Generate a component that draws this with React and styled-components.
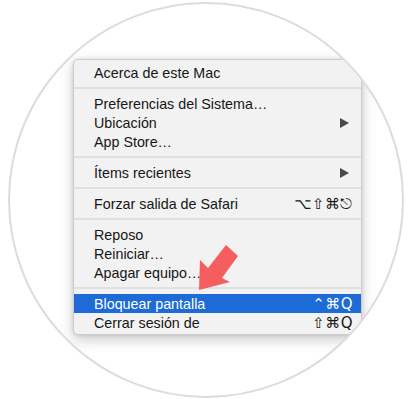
import styled, { createGlobalStyle } from 'styled-components'

const GlobalStyle = createGlobalStyle`
  html, body {
    margin: 0;
    padding: 0;
    background: #ffffff;
  }
  #root {
    width: 410px;
    height: 399px;
    overflow: hidden;
  }
`

const items = [
    [{ label: 'Acerca de este Mac' }],
    [
        { label: 'Preferencias del Sistema…' },
        { label: 'Ubicación', submenu: true },
        { label: 'App Store…' },
    ],
    [{ label: 'Ítems recientes', submenu: true }],
    [{ label: 'Forzar salida de Safari', keys: '⌥⇧⌘⎋' }],
    [
        { label: 'Reposo' },
        { label: 'Reiniciar…' },
        { label: 'Apagar equipo…' },
    ],
    [
        { label: 'Bloquear pantalla', keys: '⌃⌘Q', active: true },
        { label: 'Cerrar sesión de', keys: '⇧⌘Q' },
    ],
]

export default function App() {
    return (
        <>
            <GlobalStyle />
            <Circle>
                <Menu>
                    {items.map((group, i) => (
                        <Group key={i}>
                            {i > 0 && <Separator />}
                            {group.map((item) => (
                                <Row key={item.label} $active={item.active}>
                                    <span>{item.label}</span>
                                    {item.submenu && <Chevron />}
                                    {item.keys && <Keys>{item.keys}</Keys>}
                                </Row>
                            ))}
                        </Group>
                    ))}
                </Menu>
                <Arrow viewBox="0 0 50 55" width="50" height="55">
                    <polygon points="4,50 5,20 13,28 31,5 43,16 27,38 35,42" fill="#f65d5e" />
                </Arrow>
            </Circle>
        </>
    )
}

const Circle = styled.div`
position: relative;
box-sizing: border-box;
width: 396px;
height: 396px;
margin: 2px 0 0 8px;
padding: 55px 0 0 63px;
border: 2px solid #dcdcdc;
border-radius: 50%;
background: #ffffff;
overflow: hidden;
`

const Menu = styled.div`
box-sizing: border-box;
width: 289px;
padding: 3px 0 2px;
background: #f2f2f2;
border: 1px solid #cbcbcb;
border-radius: 5px;
box-shadow: 0 5px 14px rgba(0, 0, 0, 0.2), 0 0 4px rgba(0, 0, 0, 0.12);
font-family: "Liberation Sans", "DejaVu Sans", sans-serif;
font-size: 14.3px;
color: #161616;
`

const Group = styled.div`
display: flex;
flex-direction: column;
`

const Separator = styled.div`
height: 2px;
margin: 5px 0;
background: #e0e0e0;
`

const Row = styled.div`
display: flex;
align-items: center;
justify-content: space-between;
height: 19px;
padding: 0 8px 0 20px;
background: ${(p) => (p.$active ? '#1c6bd6' : 'transparent')};
color: ${(p) => (p.$active ? '#ffffff' : '#161616')};
`

const Chevron = styled.i`
width: 0;
height: 0;
margin-right: 4px;
border-left: 9px solid #4a4a4a;
border-top: 5px solid transparent;
border-bottom: 5px solid transparent;
`

const Keys = styled.span`
font-family: "DejaVu Sans", sans-serif;
font-size: 15px;
letter-spacing: 0.5px;
`

const Arrow = styled.svg`
position: absolute;
left: 185px;
top: 236px;
`
